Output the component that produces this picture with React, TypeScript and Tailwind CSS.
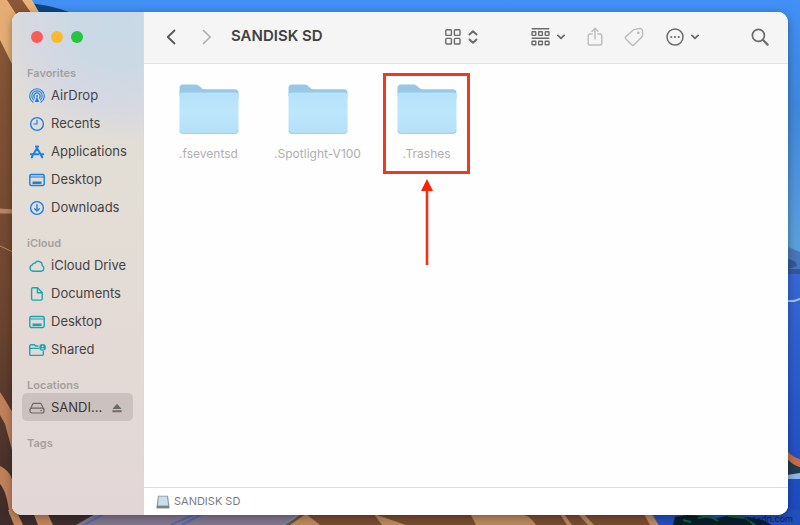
import React from "react";
import clsx from "clsx";

type IconProps = { children: React.ReactNode; className?: string; viewBox?: string };

const Icon = ({ children, className = "h-4 w-4", viewBox = "0 0 16 16" }: IconProps) => (
  <svg
    viewBox={viewBox}
    className={clsx("shrink-0", className)}
    fill="none"
    stroke="currentColor"
    strokeWidth="1.4"
    strokeLinecap="round"
    strokeLinejoin="round"
    aria-hidden="true"
  >
    {children}
  </svg>
);

const AirDropIcon = () => (
  <Icon>
    <path d="M4 14.2a7.3 7.3 0 1 1 8 0" strokeWidth="1.1" />
    <path d="M4.6 12a5.2 5.2 0 1 1 6.8 0" strokeWidth="1.1" />
    <path d="M5.7 10.2a3.1 3.1 0 1 1 4.6 0" strokeWidth="1.1" />
    <path d="M8 8.6 5.8 14h4.4z" fill="currentColor" stroke="none" />
    <circle cx="8" cy="8" r="1" fill="currentColor" stroke="none" />
  </Icon>
);

const RecentsIcon = () => (
  <Icon>
    <circle cx="8" cy="8" r="6.4" />
    <path d="M8 4v4H4.8" strokeWidth="1.2" />
  </Icon>
);

const ApplicationsIcon = () => (
  <Icon>
    <path d="M7 2.4 8 4.1l1-1.7M8 4.1 4.6 10M8 4.1l5.2 9.2M3.6 11.8l-.9 1.6" strokeWidth="2" />
    <path d="M1.8 10.3h7.4M12 10.3h2.2" strokeWidth="2" />
  </Icon>
);

const DesktopIcon = () => (
  <Icon>
    <rect x="0.8" y="2.5" width="14.4" height="11" rx="1.4" />
    <path d="M1 5h14" strokeWidth="1.1" />
    <path d="M3.5 9.5h9V12h-9z" fill="currentColor" stroke="none" />
  </Icon>
);

const DownloadsIcon = () => (
  <Icon>
    <circle cx="8" cy="8" r="6.4" />
    <path d="M8 4.8v6M5.7 8.8 8 11l2.3-2.2" />
  </Icon>
);

const CloudIcon = () => (
  <Icon>
    <path d="M4 13.2a3.2 3.2 0 0 1-.5-6.3A2.2 2.2 0 0 1 6 5.2a3.9 3.9 0 0 1 7.2 2.5 2.9 2.9 0 0 1-.9 5.5z" />
  </Icon>
);

const DocumentIcon = () => (
  <Icon>
    <path d="M3.9 1.8h4.5l4.8 4.8v6.2a1.3 1.3 0 0 1-1.3 1.3h-8a1.3 1.3 0 0 1-1.3-1.3V3.1a1.3 1.3 0 0 1 1.3-1.3z" />
    <path d="M8.4 2v4.8h4.6" />
  </Icon>
);

const SharedIcon = () => (
  <Icon className="-mr-px h-4 w-[17px]" viewBox="0 0 17 16">
    <path d="M9 4H6.6L5.4 2.8H1.9A1.2 1.2 0 0 0 .7 4v8.2a1.2 1.2 0 0 0 1.2 1.2h11.2a1.2 1.2 0 0 0 1.2-1.2V9.6M.8 6.4h8.6" />
    <circle cx="13.6" cy="5.4" r="3.3" fill="currentColor" stroke="none" />
    <circle cx="13.6" cy="4.4" r="0.9" fill="#dfe6e4" stroke="none" />
    <path d="M12 7.2c.4-1.4 2.8-1.4 3.2 0z" fill="#dfe6e4" stroke="none" />
  </Icon>
);

const DriveIcon = () => (
  <Icon>
    <path d="M1.2 9.6 3.5 4.4c.3-.7.8-1 1.5-1h6c.7 0 1.2.3 1.5 1l2.3 5.2" strokeWidth="1.2" />
    <rect x="1" y="8.2" width="14" height="4.8" rx="2" strokeWidth="1.2" />
    <path d="M11.8 10.6h.6" />
  </Icon>
);

const DownChevron = () => (
  <Icon className="h-2 w-2" viewBox="0 0 8 8">
    <path d="m.9 2.4 3.1 3 3.1-3" strokeWidth="1.8" />
  </Icon>
);

const FolderIcon = () => (
  <svg viewBox="0 0 60 50" className="h-[50px] w-[60px]" aria-hidden="true">
    <defs>
      <linearGradient id="folder-front" x1="0" y1="0" x2="0" y2="1">
        <stop offset="0" stopColor="#b6e2fa" />
        <stop offset="0.5" stopColor="#bce6fc" />
        <stop offset="1" stopColor="#b5e0f8" />
      </linearGradient>
    </defs>
    <path d="M.5 12V4C.5 1.600 1.700.4 4.100.4h11.400c2 0 3.200.4 4.600 1.600l2.600 2.200c1 .8 1.800 1 3 1h30c2.600 0 3.800 1.200 3.800 3.800v5z" fill="#99c8e6" />
    <path d="M.5 11.800c0-2.200 1.200-3.400 3.400-3.400h52.200c2.200 0 3.400 1.200 3.400 3.400v34.400c0 2.200-1.200 3.400-3.400 3.400H3.900c-2.200 0-3.400-1.200-3.400-3.400z" fill="url(#folder-front)" />
    <path d="M1 46.600c.2 2 1.300 2.800 3.200 2.800h51.600c1.900 0 3-.8 3.200-2.800" fill="none" stroke="#a3cce3" />
  </svg>
);

const sections = [
  {
    title: "Favorites",
    color: "text-[#1b7fe3]",
    items: [
      { name: "AirDrop", icon: <AirDropIcon /> },
      { name: "Recents", icon: <RecentsIcon /> },
      { name: "Applications", icon: <ApplicationsIcon /> },
      { name: "Desktop", icon: <DesktopIcon /> },
      { name: "Downloads", icon: <DownloadsIcon /> },
    ],
  },
  {
    title: "iCloud",
    color: "text-[#1ba5b3]",
    items: [
      { name: "iCloud Drive", icon: <CloudIcon /> },
      { name: "Documents", icon: <DocumentIcon /> },
      { name: "Desktop", icon: <DesktopIcon /> },
      { name: "Shared", icon: <SharedIcon /> },
    ],
  },
];

const files = [
  { name: ".fseventsd", marked: false },
  { name: ".Spotlight-V100", marked: false },
  { name: ".Trashes", marked: true },
];

const SectionTitle = ({ children }: { children: React.ReactNode }) => (
  <h2 className="pl-[15px] text-[11px] leading-4 font-semibold text-[#a5a09e]">{children}</h2>
);

const Sidebar = () => (
  <aside className="flex w-[132px] shrink-0 flex-col border-r border-[#dcd8d6] bg-[#e3dad6] bg-[radial-gradient(ellipse_130px_120px_at_110px_10px,#c8d9e6_0%,#ccd9e4_40%,#d6d8e2_70%,transparent_100%),linear-gradient(180deg,#dfded7_0%,#e3ddd5_40%,#e3dad5_65%,#e2d7d6_100%)]">
    <div className="mb-[3px] flex h-[50px] items-center gap-2 pl-[19px]">
      <button aria-label="Close" className="h-3 w-3 rounded-full bg-[#fc5b57]" />
      <button aria-label="Minimize" className="h-3 w-3 rounded-full bg-[#fdb92c]" />
      <button aria-label="Zoom" className="h-3 w-3 rounded-full bg-[#27c440]" />
    </div>
    <nav className="flex flex-col gap-[14px]">
      {sections.map((section) => (
        <section key={section.title}>
          <SectionTitle>{section.title}</SectionTitle>
          <ul>
            {section.items.map((item) => (
              <li key={item.name}>
                <a
                  href="#"
                  className="flex h-7 items-center gap-[6px] pt-px pl-[17px] text-[13px] whitespace-nowrap text-[#454342]"
                >
                  <span className={section.color}>{item.icon}</span>
                  {item.name}
                </a>
              </li>
            ))}
          </ul>
        </section>
      ))}
      <section>
        <SectionTitle>Locations</SectionTitle>
        <div className="mx-[10px] flex h-7 items-center rounded-[5px] bg-[#cbc2bf] pt-px pr-[11px] pl-[7px] text-[#6d6967]">
          <a href="#" className="flex min-w-0 flex-1 items-center gap-[6px]">
            <DriveIcon />
            <span className="text-[13px] text-[#383635]">SANDI...</span>
          </a>
          <button aria-label="Eject">
            <Icon className="h-[10px] w-[10px]" viewBox="0 0 10 10">
              <path d="M5 .8 9.600 6H.4zM.4 7.300h9.200v1.900H.4z" fill="currentColor" stroke="none" />
            </Icon>
          </button>
        </div>
      </section>
      <SectionTitle>Tags</SectionTitle>
    </nav>
  </aside>
);

const Toolbar = () => (
  <header className="flex h-[52px] items-center border-b border-[#e3e3e3] bg-[#f5f5f5] pr-[19px] pb-[2px] pl-[22px] text-[#6b6b6b]">
    <button aria-label="Back" className="text-[#555]">
      <Icon className="h-4 w-[10px]" viewBox="0 0 10 16">
        <path d="M8.5 1.500 1.800 8l6.700 6.500" strokeWidth="1.8" />
      </Icon>
    </button>
    <button aria-label="Forward" className="ml-[26px] text-[#adadad]">
      <Icon className="h-4 w-[10px]" viewBox="0 0 10 16">
        <path d="M1.500 1.500 8.200 8l-6.700 6.500" strokeWidth="1.6" />
      </Icon>
    </button>
    <h1 className="ml-[19px] text-[15px] font-semibold whitespace-nowrap text-[#424242]">SANDISK SD</h1>

    <button aria-label="View" className="ml-auto flex items-center gap-[7px]">
      <Icon>
        <rect x="0.8" y="0.8" width="5.6" height="5.6" rx="0.8" />
        <rect x="9.400" y="0.8" width="5.6" height="5.6" rx="0.8" />
        <rect x="0.8" y="9.400" width="5.6" height="5.6" rx="0.8" />
        <rect x="9.400" y="9.400" width="5.6" height="5.6" rx="0.8" />
      </Icon>
      <Icon className="h-[14px] w-[10px]" viewBox="0 0 10 14">
        <path d="M1.500 4.500 5 1.300l3.500 3.200M1.500 9.500 5 12.700l3.500-3.200" strokeWidth="1.9" />
      </Icon>
    </button>
    <button aria-label="Group" className="ml-[53px] flex items-center gap-[7px]">
      <Icon className="h-[18px] w-[19px]" viewBox="0 0 19 18">
        <path d="M1.200.8h16.600M1.200 10.200h16.600" />
        <rect x="1" y="3.800" width="3.800" height="3.600" rx="0.6" />
        <rect x="7.600" y="3.800" width="3.800" height="3.600" rx="0.6" />
        <rect x="14.200" y="3.800" width="3.800" height="3.600" rx="0.6" />
        <rect x="1" y="13.200" width="3.800" height="3.600" rx="0.6" />
        <rect x="7.600" y="13.200" width="3.800" height="3.600" rx="0.6" />
        <rect x="14.200" y="13.200" width="3.800" height="3.600" rx="0.6" />
      </Icon>
      <DownChevron />
    </button>
    <button aria-label="Share" className="ml-[22px] text-[#bcbcbc]">
      <Icon className="h-5 w-4" viewBox="0 0 16 20">
        <path d="M5.200 7H3a1.800 1.800 0 0 0-1.800 1.800v7.400A1.800 1.800 0 0 0 3 18h10a1.800 1.800 0 0 0 1.800-1.800V8.800A1.800 1.800 0 0 0 13 7h-2.200M8 12V1.400M5 4.200l3-3 3 3" />
      </Icon>
    </button>
    <button aria-label="Tags" className="ml-[21px] text-[#bcbcbc]">
      <Icon className="h-5 w-5" viewBox="0 0 20 20">
        <path d="M10.800 2.400 16 1.500c1.200-.2 2.400.9 2.500 2.200l.1 4.200c0 .8-.2 1.400-.8 2l-7.600 7.900c-.8.8-1.700.8-2.500 0l-5.800-5.700c-.8-.8-.8-1.800 0-2.500L9 3.300c.5-.5 1-.8 1.800-.9z" />
        <circle cx="14.300" cy="5.800" r="0.700" />
      </Icon>
    </button>
    <button aria-label="More" className="ml-[22px] flex items-center gap-[7px]">
      <Icon className="h-[18px] w-[18px]" viewBox="0 0 18 18">
        <circle cx="9" cy="9" r="8" strokeWidth="1.5" />
        <path d="M5.300 9h.01M9 9h.01M12.700 9h.01" strokeWidth="2.2" />
      </Icon>
      <DownChevron />
    </button>
    <button aria-label="Search" className="ml-[52px]">
      <Icon className="h-[18px] w-[18px]" viewBox="0 0 18 18">
        <circle cx="7.400" cy="7.400" r="6" strokeWidth="1.7" />
        <path d="m12 12 4.600 4.600" strokeWidth="2.2" />
      </Icon>
    </button>
  </header>
);

const Files = () => (
  <ul className="flex flex-1 flex-wrap content-start gap-[22px] bg-[#fefefe] pt-[9px] pl-[21px]">
    {files.map((file) => (
      <li
        key={file.name}
        className={clsx(
          "relative flex h-[101px] w-[87px] flex-col items-center border-[3px] pt-2",
          file.marked ? "border-[#ee3a23]" : "border-transparent"
        )}
      >
        <FolderIcon />
        <span className="mt-3 text-[12px] leading-4 whitespace-nowrap text-[#aeaeae]">{file.name}</span>
        {file.marked && (
          <svg
            viewBox="0 0 12 86"
            className="absolute top-full left-1/2 mt-2 h-[86px] w-3 -translate-x-1/2"
            aria-hidden="true"
          >
            <path d="M6 0l6 12H0z" fill="#fb2306" />
            <path d="M6 10v76" stroke="#ee3118" strokeWidth="2.6" />
          </svg>
        )}
      </li>
    ))}
  </ul>
);

const StatusBar = () => (
  <footer className="flex h-7 items-center gap-1 border-t border-[#dedede] bg-white pl-3 text-[11px] text-[#7b7b7b]">
    <svg viewBox="0 0 14 14" className="h-[14px] w-[14px]" aria-hidden="true">
      <path d="M2 .8h10l1.300 9.700v2.700H.7v-2.700z" fill="#8c9499" />
      <path d="M2.900 1.500h8.200l1 8.900H1.900z" fill="#c8e0ee" />
      <path d="M.7 11h12.600v2.200H.7z" fill="#7c8286" />
    </svg>
    SANDISK SD
  </footer>
);

const Wallpaper = () => (
  <svg
    viewBox="0 0 800 525"
    preserveAspectRatio="none"
    className="absolute inset-0 h-full w-full"
    aria-hidden="true"
  >
    <defs>
      <linearGradient id="sky" x1="0" y1="0" x2="0" y2="1">
        <stop offset="0" stopColor="#4190f5" />
        <stop offset="0.2" stopColor="#3f86dd" />
        <stop offset="0.46" stopColor="#5a9edb" />
      </linearGradient>
      <linearGradient id="sea" x1="0" y1="0" x2="0" y2="1">
        <stop offset="0" stopColor="#3768d4" />
        <stop offset="1" stopColor="#1b48bd" />
      </linearGradient>
      <linearGradient id="cliff" x1="0" y1="0" x2="0" y2="1">
        <stop offset="0" stopColor="#8a5836" />
        <stop offset="0.6" stopColor="#6d452f" />
        <stop offset="1" stopColor="#3c2a29" />
      </linearGradient>
    </defs>
    <rect width="800" height="525" fill="url(#sky)" />
    <path d="M770 240l18 7 12 5v24h-30z" fill="#4777b8" />
    <path d="M786 259c7 0 11 3 11 7l-9 3h12v9h-20z" fill="#33579f" />
    <rect x="770" y="274" width="30" height="251" fill="url(#sea)" />
    <path d="M780 301h14l6-2" fill="none" stroke="#9cc4ee" strokeWidth="2" />
    <path d="M780 445l20 20v12h-20z" fill="#203c4d" />
    <path d="M780 442c7 10 12 15 22 18v8c-10-3-16-9-22-18z" fill="#c66c48" />
    <path d="M780 476l20-3v6h-20z" fill="#8db5e5" />

    <path d="M20 2q28 2 52 11H20z" fill="#0d467f" />
    <path d="M0 0h31l9 16v509H0z" fill="url(#cliff)" />
    <path d="M0 0h7l9 14v58L0 40z" fill="#e4ad75" />
    <path d="M22 0h10l8 14h-8z" fill="#e8b27a" />
    <path d="M0 209l14 1v3H0zM0 246l13 6" fill="#b98760" stroke="#b98760" />
    <path d="M0 392c8 12 10 17 14 22v43L5 424 0 415zM0 466c9 5 12 9 14 22l6 37h-9C8 498 5 490 0 484z" fill="#bf815b" />

    <path d="M0 515h110l-25 10H0z" fill="#3e2d2e" />
    <path d="M8 510h8l7 15h-9zM32 510h14l7 15H38z" fill="#c08359" />
    <path d="M102 510h202l-20 15H76z" fill="#80768d" />
    <path d="m195 514-24 11M202 514l-20 11M104 514l-20 11M306 514l-20 11" stroke="#5369a8" strokeWidth="2" />
    <path d="M306 510h342l12 15H286z" fill="#794b30" />
    <path d="M306 514l14 11h-30zM374 514l32 11h-24zM470 513h50c9 3 13 7 16 12h-60zM560 514h4l8 11h-5zM578 514h6l10 11h-6zM644 514h7l8 11h-9z" fill="#ba875c" />
    <path d="M650 510h150v15H659z" fill="#234fbd" />
    <path d="M673 525l2-8 12-2 14 1 12 3 14-3 20 1 16 3 9 5z" fill="#071f2a" />
    <path d="M698 518l12-2 8 5M728 516l17 2 10 7M683 520l8 2" fill="none" stroke="#126047" strokeWidth="2" />
  </svg>
);

export default function App() {
  return (
    <main className="relative flex min-h-screen flex-col overflow-hidden bg-[#2854c8] px-3 pt-3 pb-[10px] font-['Inter','Liberation_Sans',sans-serif]">
      <Wallpaper />
      <div className="relative flex flex-1 overflow-hidden rounded-[10px] bg-white shadow-[0_2px_8px_rgba(0,0,0,0.35)]">
        <Sidebar />
        <div className="flex min-w-0 flex-1 flex-col">
          <Toolbar />
          <Files />
          <StatusBar />
        </div>
      </div>
      <span className="absolute right-[7px] bottom-0 text-[9px] leading-3 text-[#0b1b3d]">wsxdn.com</span>
    </main>
  );
}
